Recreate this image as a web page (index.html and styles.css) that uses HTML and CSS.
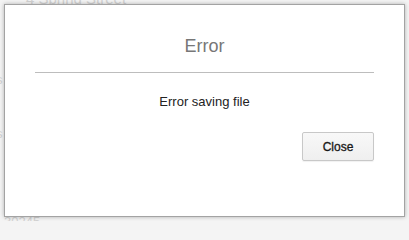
FILE: index.html
```html
<!DOCTYPE html>
<html>
<head>
<meta charset="utf-8">
<link rel="stylesheet" href="styles.css">
</head>
<body>
<div class="page">
  <div class="page-top">4 Spring Street</div>
  <div class="page-side">s</div>
  <div class="page-side second">s</div>
  <div class="page-bottom">30245</div>
</div>
<div class="dialog" role="dialog">
  <h1 class="dialog-title">Error</h1>
  <hr class="dialog-rule">
  <p class="dialog-message">Error saving file</p>
  <div class="dialog-actions">
    <button class="btn">Close</button>
  </div>
</div>
</body>
</html>
```
FILE: styles.css
```css
html, body {
  margin: 0;
  padding: 0;
}
body {
  width: 409px;
  height: 221px;
  overflow: hidden;
  position: relative;
  background: #f4f4f4;
  font-family: "Liberation Sans", Arial, sans-serif;
}
.page {
  color: #d2d2d2;
  font-size: 15px;
}
.page-top {
  position: absolute;
  left: 26px;
  top: -10px;
}
.page-side {
  position: absolute;
  left: -4px;
  top: 72px;
  font-size: 13px;
}
.page-side.second {
  top: 126px;
}
.page-bottom {
  position: absolute;
  left: 4px;
  top: 214px;
  font-size: 13px;
}
.dialog {
  position: absolute;
  left: 4px;
  top: 4px;
  width: 401px;
  height: 213px;
  box-sizing: border-box;
  background: #fff;
  border: 1px solid #a3a3a3;
  box-shadow: 0 0 4px rgba(0, 0, 0, 0.28);
  padding: 31px 30px 0;
  display: flex;
  flex-direction: column;
}
.dialog-title {
  margin: 0;
  font-size: 18px;
  font-weight: normal;
  color: #777;
  text-align: center;
  line-height: 21px;
}
.dialog-rule {
  margin: 15px 0 0;
  border: 0;
  height: 1px;
  background: #bdbdbd;
}
.dialog-message {
  margin: 21px 0 0;
  font-size: 13px;
  line-height: 15px;
  color: #222;
  text-align: center;
}
.dialog-actions {
  display: flex;
  justify-content: flex-end;
  margin-top: 23px;
}
.btn {
  width: 72px;
  height: 29px;
  box-sizing: border-box;
  border: 1px solid #c8c8c8;
  border-radius: 2px;
  background: linear-gradient(#f8f8f8, #efefef);
  box-shadow: 0 1px 1px rgba(0, 0, 0, 0.06);
  font-family: "Liberation Sans", Arial, sans-serif;
  font-size: 12px;
  font-weight: normal;
  color: #111;
  -webkit-text-stroke: 0.3px #222;
  padding: 0;
}
```
